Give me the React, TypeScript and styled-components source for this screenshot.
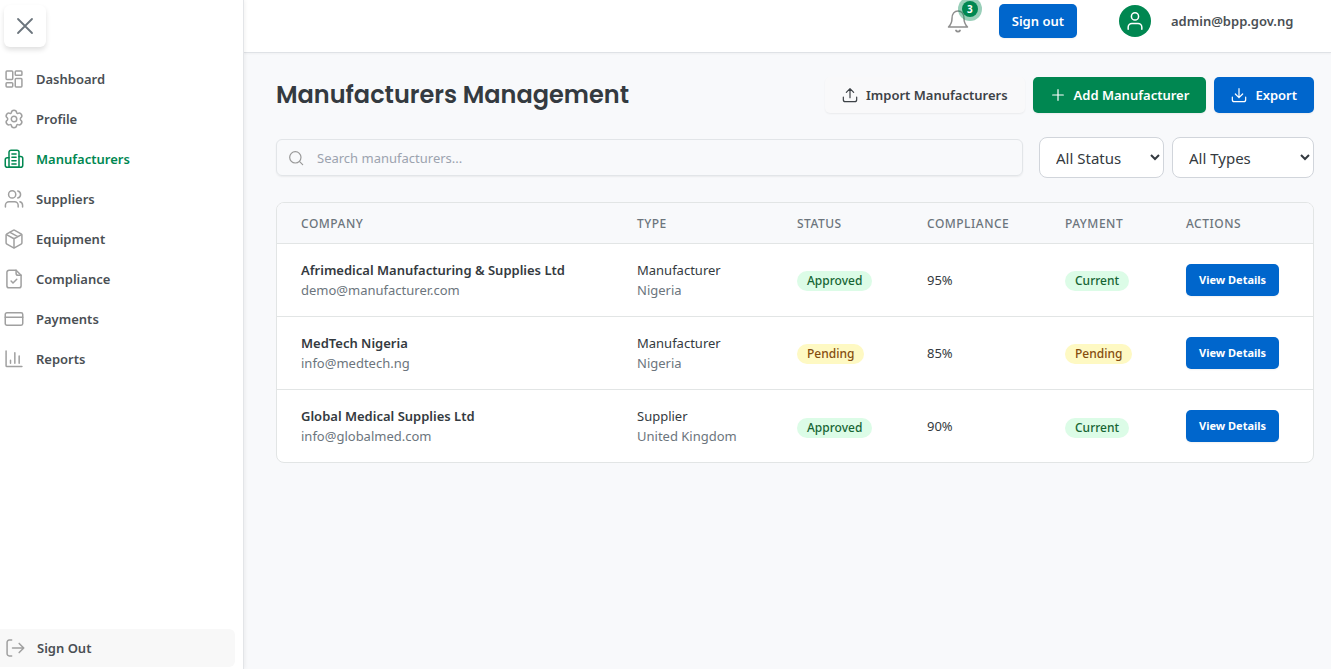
import React from "react";
import styled, { createGlobalStyle, css } from "styled-components";

const GlobalStyle = createGlobalStyle`
  *, *::before, *::after { box-sizing: border-box; }
  body {
    margin: 0;
    background: #f8f9fb;
    color: #343a40;
    font-family: "Noto Sans", "Open Sans", sans-serif;
    font-size: 13px;
    line-height: 20px;
  }
  button, input, select { font: inherit; color: inherit; margin: 0; }
  h1, p { margin: 0; }
`;

/* ---------- icons ---------- */

const Glyph = styled.svg<{ $size?: number }>`
  width: ${(p) => p.$size ?? 20}px;
  height: ${(p) => p.$size ?? 20}px;
  flex: none;
  fill: none;
  stroke: currentColor;
  stroke-width: 1.8;
  stroke-linecap: round;
  stroke-linejoin: round;
`;

type IconName =
  | "dashboard" | "gear" | "building" | "users" | "box" | "file"
  | "card" | "chart" | "logout" | "close" | "bell" | "user"
  | "upload" | "plus" | "download" | "search";

const shapes: Record<IconName, React.ReactNode> = {
  dashboard: (
    <>
      <rect x="2.5" y="2.5" width="8" height="10" rx="1" />
      <rect x="13.5" y="2.5" width="8" height="5" rx="1" />
      <rect x="13.5" y="11.5" width="8" height="10" rx="1" />
      <rect x="2.5" y="16.5" width="8" height="5" rx="1" />
    </>
  ),
  gear: (
    <>
      <path d="M8.800 4.300C9 2.500 10 1.500 12 1.500s3 1 3.200 2.800c.1.900.9 1.300 1.700.9 1.700-.7 3-.3 4 1.400s.7 3-.8 4.100c-.7.600-.7 2 0 2.600 1.500 1.100 1.800 2.400.8 4.100s-2.300 2.100-4 1.400c-.8-.4-1.600 0-1.700.9-.2 1.800-1.200 2.800-3.200 2.800s-3-1-3.200-2.800c-.1-.9-.9-1.300-1.700-.9-1.700.7-3 .3-4-1.400s-.7-3 .8-4.100c.7-.6.7-2 0-2.600-1.500-1.100-1.800-2.400-.8-4.100s2.300-2.100 4-1.400c.8.4 1.600 0 1.700-.9z" />
      <circle cx="12" cy="12" r="3.300" />
    </>
  ),
  building: (
    <>
      <path d="M6 22V4a2.500 2.500 0 0 1 2.500-2.500h7A2.500 2.500 0 0 1 18 4v18z" />
      <path d="M6 10.500H4a2.500 2.500 0 0 0-2.500 2.500v6.500A2.500 2.500 0 0 0 4 22h16a2.500 2.500 0 0 0 2.500-2.500V11.500A2.500 2.500 0 0 0 20 9h-2M9.500 6h5M9.500 10h5M9.500 14h5M9.500 18h5" />
    </>
  ),
  users: (
    <>
      <circle cx="9.800" cy="6.500" r="4.300" />
      <path d="M17 21.500v-2a4.300 4.300 0 0 0-4.300-4.300H6a4.300 4.300 0 0 0-4.300 4.300v2M22.300 21.500v-2a4.300 4.300 0 0 0-3.200-4.100M16.500 2.300a4.300 4.300 0 0 1 0 8.400" />
    </>
  ),
  box: (
    <>
      <path d="M21.500 16.500v-9a2 2 0 0 0-1-1.730l-7.500-4.200a2 2 0 0 0-2 0L3.500 5.770a2 2 0 0 0-1 1.730v9a2 2 0 0 0 1 1.730l7.500 4.200a2 2 0 0 0 2 0l7.500-4.200a2 2 0 0 0 1-1.730z" />
      <path d="M3 6.700l9 5 9-5M12 22.500V11.700M7.200 4l9.300 5.200" />
    </>
  ),
  file: (
    <>
      <path d="M14.500 1.500H6a2.500 2.500 0 0 0-2.500 2.500v16A2.500 2.500 0 0 0 6 22.500h12a2.500 2.500 0 0 0 2.500-2.500V7.500z" />
      <path d="M14.500 1.500V5A2.500 2.500 0 0 0 17 7.500h3.500M8.500 14.500l2.300 2.300 4.500-4.500" />
    </>
  ),
  card: (
    <>
      <rect x="1.500" y="4.500" width="21" height="15" rx="2" />
      <path d="M1.500 10h21" />
    </>
  ),
  chart: <path d="M2.500 2.500V20a1 1 0 0 0 1 1h18M7.800 17v-3.500M13 17V4.500M18.200 17V8.500" />,
  logout: <path d="M8 21.500H5a2.500 2.500 0 0 1-2.500-2.500V5A2.500 2.500 0 0 1 5 2.500h3M9 12h13.500M17 6.500l5.500 5.500-5.500 5.500" />,
  close: <path d="M5 5l14 14M19 5L5 19" />,
  bell: (
    <>
      <path d="M18 9.500C18 5 15.500 2 12 2S6 5 6 9.500c0 4.500-1.500 6.500-3.500 8.500h19c-2-2-3.500-4-3.500-8.500z" strokeWidth="1.5" />
      <path d="M10 21.500a2.300 2.300 0 0 0 4 0" />
    </>
  ),
  user: (
    <>
      <circle cx="12" cy="6.500" r="4.300" />
      <path d="M3.800 22v-2.500a4.500 4.500 0 0 1 4.500-4.500h7.400a4.500 4.500 0 0 1 4.500 4.500V22" />
    </>
  ),
  upload: <path d="M2 15v4a3 3 0 0 0 3 3h14a3 3 0 0 0 3-3v-4M12 16V2.500M6.500 8L12 2.500 17.500 8" />,
  download: <path d="M2 15v4a3 3 0 0 0 3 3h14a3 3 0 0 0 3-3v-4M12 2.500V16M6.500 10.500L12 16l5.500-5.500" />,
  plus: <path d="M12 4v16M4 12h16" />,
  search: (
    <>
      <circle cx="11" cy="11" r="8.500" />
      <path d="M17.500 17.500l4.500 4.500" />
    </>
  ),
};

const Icon = ({ name, size }: { name: IconName; size?: number }) => (
  <Glyph viewBox="0 0 24 24" $size={size} aria-hidden="true">
    {shapes[name]}
  </Glyph>
);

/* ---------- shell ---------- */

const Shell = styled.div`
  display: flex;
  min-height: 100vh;
`;

const Sidebar = styled.aside`
  display: flex;
  flex-direction: column;
  flex: none;
  width: 244px;
  padding-bottom: 2px;
  background: #fff;
  border-right: 1px solid #e3e5e8;
  box-shadow: 1px 0 4px rgba(0, 0, 0, 0.06);
  z-index: 1;
`;

const CloseButton = styled.button`
  display: grid;
  place-items: center;
  width: 42px;
  height: 42px;
  margin: 5px 4px 12px;
  padding: 0;
  border: 0;
  border-radius: 6px;
  background: #fff;
  color: #6c757d;
  box-shadow: 0 3px 5px rgba(0, 0, 0, 0.12);
`;

const Nav = styled.nav`
  display: flex;
  flex-direction: column;
  flex: 1;
`;

const NavLink = styled.a<{ $active?: boolean }>`
  display: flex;
  align-items: center;
  gap: 12px;
  height: 40px;
  padding: 0 4px;
  color: ${(p) => (p.$active ? "#008751" : "#4a4f54")};
  font-weight: 600;
  text-decoration: none;

  svg { color: ${(p) => (p.$active ? "#008751" : "#a0a0a0")}; }
`;

const SidebarSignOut = styled.button`
  display: flex;
  align-items: center;
  gap: 12px;
  height: 38px;
  margin-right: 8px;
  padding: 0 5px;
  border: 0;
  border-radius: 0 6px 6px 0;
  background: #f8f8f8;
  color: #4a4f54;
  font-weight: 600;

  svg { color: #a0a0a0; }
`;

const Column = styled.div`
  display: flex;
  flex-direction: column;
  flex: 1;
  min-width: 0;
`;

const TopBar = styled.header`
  display: flex;
  align-items: center;
  justify-content: flex-end;
  height: 53px;
  padding: 0 35px 10px 0;
  background: #fff;
  border-bottom: 1px solid #dfe2e6;
  box-shadow: 0 1px 2px rgba(0, 0, 0, 0.04);
`;

const BellButton = styled.button`
  position: relative;
  display: flex;
  margin-right: 29px;
  padding: 0;
  border: 0;
  background: none;
  color: #8f8f8f;
`;

const BellCount = styled.span`
  position: absolute;
  top: -8px;
  right: -8px;
  width: 16px;
  height: 16px;
  border-radius: 50%;
  background: #008751;
  box-shadow: 0 0 0 4px rgba(0, 135, 81, 0.4);
  color: #fff;
  font-size: 10px;
  font-weight: 700;
  line-height: 16px;
  text-align: center;
`;

const Avatar = styled.span`
  display: grid;
  place-items: center;
  width: 32px;
  height: 32px;
  margin: 0 20px 0 42px;
  border-radius: 50%;
  background: #008751;
  color: #fff;
`;

const Email = styled.span`
  min-width: 125px;
  color: #4a4f54;
  font-weight: 600;
`;

/* ---------- buttons ---------- */

const tones = {
  blue: css`background: #0066cc; color: #fff;`,
  green: css`background: #008751; color: #fff;`,
  plain: css`background: #f9f9fa; color: #3d4247;`,
};

const Button = styled.button<{ $tone: keyof typeof tones; $small?: boolean; $tight?: boolean }>`
  display: inline-flex;
  align-items: center;
  gap: 8px;
  height: ${(p) => (p.$small ? 32 : p.$tight ? 34 : 36)}px;
  padding: 0 ${(p) => (p.$small || p.$tight ? 13 : 17)}px;
  border: 0;
  border-radius: 5px;
  box-shadow: 0 1px 2px rgba(0, 0, 0, 0.06);
  font-size: ${(p) => (p.$small ? 11 : 13)}px;
  font-weight: ${(p) => (p.$small ? 700 : 600)};
  white-space: nowrap;
  ${(p) => tones[p.$tone]}
`;

/* ---------- page ---------- */

const Main = styled.main`
  padding: 24px 17px 24px 32px;
`;

const Heading = styled.div`
  display: flex;
  align-items: center;
  justify-content: space-between;
`;

const Title = styled.h1`
  font-family: Poppins, Inter, sans-serif;
  font-size: 24px;
  font-weight: 600;
  line-height: 36px;
`;

const Actions = styled.div`
  display: flex;
  gap: 8px;
`;

const Filters = styled.div`
  display: flex;
  align-items: center;
  gap: 8px;
  margin: 24px 0;
`;

const SearchBox = styled.label`
  display: flex;
  align-items: center;
  flex: 1;
  gap: 13px;
  height: 37px;
  margin-right: 8px;
  padding: 0 11px;
  border: 1px solid #e2e5e8;
  border-radius: 6px;
  box-shadow: 0 1px 2px rgba(0, 0, 0, 0.06);
  color: #999;
`;

const SearchInput = styled.input`
  flex: 1;
  min-width: 0;
  padding: 0;
  border: 0;
  outline: 0;
  background: none;

  &::placeholder { color: #9ca3af; opacity: 1; }
`;

const Select = styled.select<{ $width: number }>`
  width: ${(p) => p.$width}px;
  height: 41px;
  padding: 0 12px;
  border: 1px solid #d1d5db;
  border-radius: 8px;
  background-color: #fff;
  font-size: 15px;
`;

const Card = styled.section`
  overflow: hidden;
  border: 1px solid #e2e5e5;
  border-radius: 8px;
  background: #fff;
`;

const Table = styled.table`
  width: 100%;
  table-layout: fixed;
  border-collapse: collapse;
  text-align: left;
`;

const Head = styled.th<{ $width?: number }>`
  width: ${(p) => (p.$width ? `${p.$width}px` : "auto")};
  height: 40px;
  padding: 2px 24px 0;
  background: #f8f9fb;
  color: #6c757d;
  font-size: 12px;
  font-weight: 500;
  letter-spacing: 0.5px;
  text-transform: uppercase;
`;

const Cell = styled.td`
  height: 73px;
  padding: 0 0 0 24px;
  border-top: 1px solid #e2e5e5;
`;

const BadgeCell = styled(Cell)`
  padding-top: 2px;
`;

const Strong = styled.p`
  font-weight: 600;
`;

const Muted = styled.p`
  color: #6c757d;
`;

const Badge = styled.span<{ $pending: boolean }>`
  display: inline-block;
  padding: 0 10px;
  border-radius: 10px;
  background: ${(p) => (p.$pending ? "#fef9c3" : "#dcfce7")};
  color: ${(p) => (p.$pending ? "#854d0e" : "#166534")};
  font-size: 12px;
  font-weight: 500;
  vertical-align: middle;
`;

const links: { icon: IconName; label: string }[] = [
  { icon: "dashboard", label: "Dashboard" },
  { icon: "gear", label: "Profile" },
  { icon: "building", label: "Manufacturers" },
  { icon: "users", label: "Suppliers" },
  { icon: "box", label: "Equipment" },
  { icon: "file", label: "Compliance" },
  { icon: "card", label: "Payments" },
  { icon: "chart", label: "Reports" },
];

const columns: { label: string; width?: number }[] = [
  { label: "Company" },
  { label: "Type", width: 160 },
  { label: "Status", width: 130 },
  { label: "Compliance", width: 138 },
  { label: "Payment", width: 121 },
  { label: "Actions", width: 151 },
];

const companies = [
  { name: "Afrimedical Manufacturing & Supplies Ltd", email: "demo@manufacturer.com", type: "Manufacturer", country: "Nigeria", status: "Approved", score: "95%", payment: "Current" },
  { name: "MedTech Nigeria", email: "info@medtech.ng", type: "Manufacturer", country: "Nigeria", status: "Pending", score: "85%", payment: "Pending" },
  { name: "Global Medical Supplies Ltd", email: "info@globalmed.com", type: "Supplier", country: "United Kingdom", status: "Approved", score: "90%", payment: "Current" },
];

export default function App() {
  return (
    <>
      <GlobalStyle />
      <Shell>
        <Sidebar>
          <CloseButton type="button" aria-label="Close menu">
            <Icon name="close" size={24} />
          </CloseButton>
          <Nav>
            {links.map((l) => (
              <NavLink key={l.label} href="#" $active={l.label === "Manufacturers"}>
                <Icon name={l.icon} />
                {l.label}
              </NavLink>
            ))}
          </Nav>
          <SidebarSignOut type="button">
            <Icon name="logout" />
            Sign Out
          </SidebarSignOut>
        </Sidebar>
        <Column>
          <TopBar>
            <BellButton type="button" aria-label="Notifications">
              <Icon name="bell" size={24} />
              <BellCount>3</BellCount>
            </BellButton>
            <Button type="button" $tone="blue" $tight>Sign out</Button>
            <Avatar><Icon name="user" /></Avatar>
            <Email>admin@bpp.gov.ng</Email>
          </TopBar>
          <Main>
            <Heading>
              <Title>Manufacturers Management</Title>
              <Actions>
                <Button type="button" $tone="plain"><Icon name="upload" size={16} />Import Manufacturers</Button>
                <Button type="button" $tone="green"><Icon name="plus" size={16} />Add Manufacturer</Button>
                <Button type="button" $tone="blue"><Icon name="download" size={16} />Export</Button>
              </Actions>
            </Heading>
            <Filters>
              <SearchBox>
                <Icon name="search" size={16} />
                <SearchInput type="text" aria-label="Search manufacturers" placeholder="Search manufacturers..." />
              </SearchBox>
              <Select $width={125} aria-label="Status"><option>All Status</option></Select>
              <Select $width={142} aria-label="Type"><option>All Types</option></Select>
            </Filters>
            <Card>
              <Table>
                <thead>
                  <tr>
                    {columns.map((c) => <Head key={c.label} scope="col" $width={c.width}>{c.label}</Head>)}
                  </tr>
                </thead>
                <tbody>
                  {companies.map((c) => (
                    <tr key={c.name}>
                      <Cell><Strong>{c.name}</Strong><Muted>{c.email}</Muted></Cell>
                      <Cell><p>{c.type}</p><Muted>{c.country}</Muted></Cell>
                      <BadgeCell><Badge $pending={c.status === "Pending"}>{c.status}</Badge></BadgeCell>
                      <Cell>{c.score}</Cell>
                      <BadgeCell><Badge $pending={c.payment === "Pending"}>{c.payment}</Badge></BadgeCell>
                      <Cell><Button type="button" $tone="blue" $small>View Details</Button></Cell>
                    </tr>
                  ))}
                </tbody>
              </Table>
            </Card>
          </Main>
        </Column>
      </Shell>
    </>
  );
}
